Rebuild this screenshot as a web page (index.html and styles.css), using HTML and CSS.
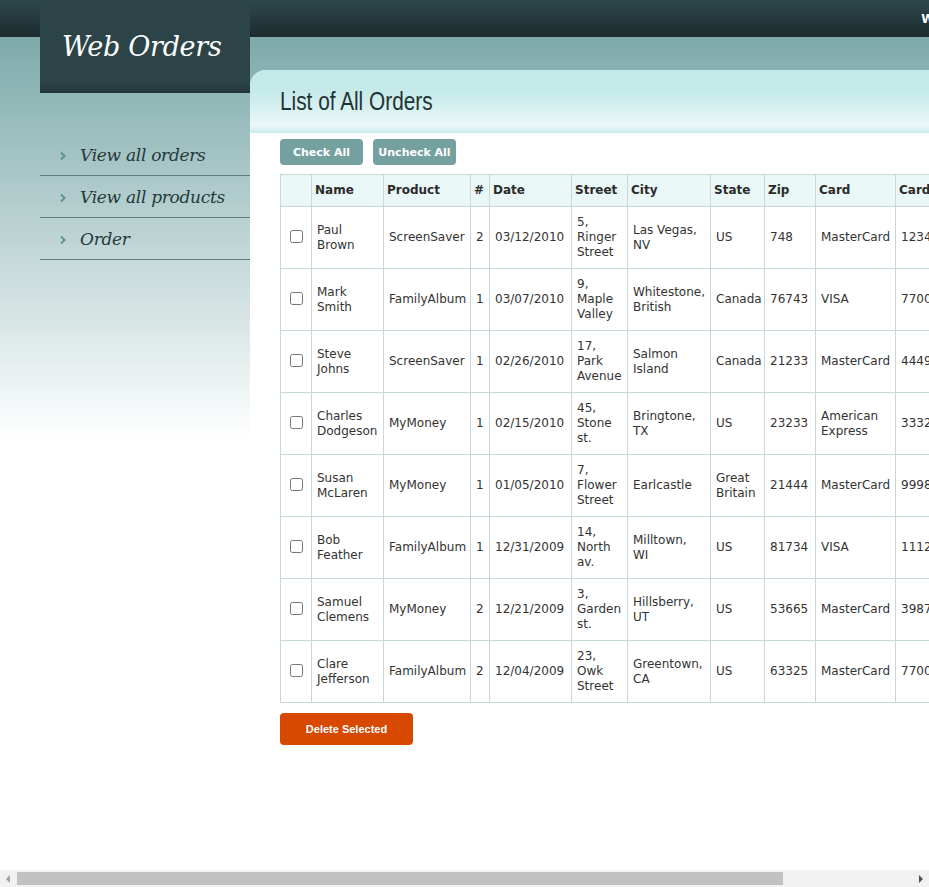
FILE: index.html
```html
<!DOCTYPE html>
<html>
<head>
<meta charset="utf-8">
<title>Web Orders</title>
<link rel="stylesheet" href="styles.css">
</head>
<body>
<div class="wrap">
  <aside class="sidebar">
    <div class="logo">Web Orders</div>
    <ul class="menu">
      <li><svg class="chev" width="8" height="10" viewBox="0 0 8 10"><polyline points="2,1.5 5.5,5 2,8.5" fill="none" stroke="#5b9292" stroke-width="2"/></svg><a href="#">View all orders</a></li>
      <li><svg class="chev" width="8" height="10" viewBox="0 0 8 10"><polyline points="2,1.5 5.5,5 2,8.5" fill="none" stroke="#5b9292" stroke-width="2"/></svg><a href="#">View all products</a></li>
      <li><svg class="chev" width="8" height="10" viewBox="0 0 8 10"><polyline points="2,1.5 5.5,5 2,8.5" fill="none" stroke="#5b9292" stroke-width="2"/></svg><a href="#">Order</a></li>
    </ul>
  </aside>
  <main class="main">
    <div class="userbar"><span class="user">Welcome, Tester! | Logout</span></div>
    <section class="panel">
      <h2 class="panel-title"><span class="title-text">List of All Orders</span></h2>
      <div class="panel-body">
        <div class="actions">
          <button class="btn btn-teal">Check All</button>
          <button class="btn btn-teal">Uncheck All</button>
        </div>
        <table class="orders">
          <colgroup>
            <col class="c-chk"><col class="c-name"><col class="c-prod"><col class="c-qty"><col class="c-date"><col class="c-street"><col class="c-city"><col class="c-state"><col class="c-zip"><col class="c-card"><col class="c-num"><col class="c-exp"><col class="c-edit">
          </colgroup>
          <thead>
            <tr><th></th><th>Name</th><th>Product</th><th>#</th><th>Date</th><th>Street</th><th>City</th><th>State</th><th>Zip</th><th>Card</th><th>Card Number</th><th>Exp</th><th></th></tr>
          </thead>
          <tbody>
            <tr><td class="chk"><input type="checkbox"></td><td>Paul Brown</td><td>ScreenSaver</td><td>2</td><td>03/12/2010</td><td>5, Ringer Street</td><td>Las Vegas, NV</td><td>US</td><td>748</td><td>MasterCard</td><td>123456789012</td><td>02/24</td><td></td></tr>
            <tr><td class="chk"><input type="checkbox"></td><td>Mark Smith</td><td>FamilyAlbum</td><td>1</td><td>03/07/2010</td><td>9, Maple Valley</td><td>Whitestone, British</td><td>Canada</td><td>76743</td><td>VISA</td><td>770077007700</td><td>01/15</td><td></td></tr>
            <tr><td class="chk"><input type="checkbox"></td><td>Steve Johns</td><td>ScreenSaver</td><td>1</td><td>02/26/2010</td><td>17, Park Avenue</td><td>Salmon Island</td><td>Canada</td><td>21233</td><td>MasterCard</td><td>444993876233</td><td>03/11</td><td></td></tr>
            <tr><td class="chk"><input type="checkbox"></td><td>Charles Dodgeson</td><td>MyMoney</td><td>1</td><td>02/15/2010</td><td>45, Stone st.</td><td>Bringtone, TX</td><td>US</td><td>23233</td><td>American Express</td><td>333255557777</td><td>03/11</td><td></td></tr>
            <tr><td class="chk"><input type="checkbox"></td><td>Susan McLaren</td><td>MyMoney</td><td>1</td><td>01/05/2010</td><td>7, Flower Street</td><td>Earlcastle</td><td>Great Britain</td><td>21444</td><td>MasterCard</td><td>999888777666</td><td>02/11</td><td></td></tr>
            <tr><td class="chk"><input type="checkbox"></td><td>Bob Feather</td><td>FamilyAlbum</td><td>1</td><td>12/31/2009</td><td>14, North av.</td><td>Milltown,<br>WI</td><td>US</td><td>81734</td><td>VISA</td><td>111222333444</td><td>10/11</td><td></td></tr>
            <tr><td class="chk"><input type="checkbox"></td><td>Samuel Clemens</td><td>MyMoney</td><td>2</td><td>12/21/2009</td><td>3, Garden st.</td><td>Hillsberry, UT</td><td>US</td><td>53665</td><td>MasterCard</td><td>398765432198</td><td>07/11</td><td></td></tr>
            <tr><td class="chk"><input type="checkbox"></td><td>Clare Jefferson</td><td>FamilyAlbum</td><td>2</td><td>12/04/2009</td><td>23, Owk Street</td><td>Greentown, CA</td><td>US</td><td>63325</td><td>MasterCard</td><td>770077007700</td><td>08/12</td><td></td></tr>
          </tbody>
        </table>
        <button class="btn btn-delete">Delete Selected</button>
      </div>
    </section>
  </main>
</div>
<div class="hscroll" aria-hidden="true">
  <span class="arrow arrow-left"></span>
  <span class="track"><span class="thumb"></span></span>
  <span class="arrow arrow-right"></span>
</div>
</body>
</html>
```
FILE: styles.css
```css
html, body {
  margin: 0;
  padding: 0;
}
body {
  min-height: 870px;
  font-family: "DejaVu Sans", Verdana, sans-serif;
  font-size: 12px;
  color: #333;
  background:
    linear-gradient(#2e484c, #1c2a2d) 0 0 / 100% 37px no-repeat,
    linear-gradient(#7eaaaa 37px, #ffffff 440px) no-repeat;
  background-color: #fff;
}
.wrap {
  display: flex;
  align-items: stretch;
  padding-left: 40px;
  width: max-content;
  min-height: 870px;
}
.sidebar {
  width: 210px;
  flex: none;
}
.logo {
  height: 93px;
  box-sizing: border-box;
  padding: 30px 0 0 22px;
  background: linear-gradient(#2c4448 0, #2c4448 80px, #23363a 93px);
  color: #fff;
  font-family: "DejaVu Serif", Georgia, serif;
  font-style: italic;
  font-size: 27px;
  line-height: 34px;
  letter-spacing: -0.3px;
}
.menu {
  list-style: none;
  margin: 41px 0 0;
  padding: 0;
}
.menu li {
  height: 41px;
  border-bottom: 1px solid #5c7e7e;
  display: flex;
  align-items: center;
  padding-left: 19px;
}
.chev {
  margin-right: 13px;
  margin-top: 2px;
}
.menu a {
  font-family: "DejaVu Serif", Georgia, serif;
  font-style: italic;
  font-size: 17px;
  color: #24393b;
  text-decoration: none;
  letter-spacing: -0.3px;
}
.main {
  flex: none;
  display: flex;
  flex-direction: column;
}
.userbar {
  height: 37px;
  display: flex;
  align-items: center;
  justify-content: flex-end;
  margin-bottom: 33px;
}
.user {
  color: #fff;
  font-weight: bold;
  font-size: 12px;
  white-space: nowrap;
  margin-right: -8px;
}
.panel {
  flex: 1;
  background: #fff;
  border-top-left-radius: 16px;
  overflow: hidden;
}
.panel-title {
  margin: 0;
  height: 63px;
  box-sizing: border-box;
  padding: 16px 0 0 30px;
  font-family: "Liberation Sans", Arial, sans-serif;
  font-weight: normal;
  font-size: 26px;
  line-height: 30px;
  color: #1f3334;
  background: linear-gradient(#c2e8e8 0, #c6eaea 22px, #e9f7f7 54px, #e6f6f6 57px, #c7eaea 63px);
}
.title-text {
  display: inline-block;
  transform: scaleX(0.8);
  transform-origin: left center;
}
.panel-body {
  padding: 6px 10px 20px 30px;
}
.actions {
  display: flex;
  gap: 10px;
  margin-bottom: 9px;
}
.btn {
  border: 0;
  color: #fff;
  font-weight: bold;
  cursor: pointer;
}
.btn-teal {
  width: 83px;
  height: 26px;
  border-radius: 4px;
  background: #74a09f;
  font-family: "DejaVu Sans", Verdana, sans-serif;
  font-size: 11px;
  padding: 0;
}
.btn-delete {
  display: block;
  margin-top: 10px;
  width: 133px;
  height: 32px;
  border-radius: 4px;
  background: #d74800;
  font-family: "Liberation Sans", Arial, sans-serif;
  font-size: 11px;
  padding: 0;
}
.orders {
  border-collapse: collapse;
  table-layout: fixed;
  width: 775px;
  border: 1px solid #c8d8d8;
}
.c-chk { width: 31px; }
.c-name { width: 72px; }
.c-prod { width: 87px; }
.c-qty { width: 19px; }
.c-date { width: 82px; }
.c-street { width: 56px; }
.c-city { width: 83px; }
.c-state { width: 54px; }
.c-zip { width: 51px; }
.c-card { width: 80px; }
.c-num { width: 104px; }
.c-exp { width: 50px; }
.c-edit { width: 30px; }
.orders th, .orders td {
  border: 1px solid #c8d8d8;
  padding: 0 4px 0 5px;
  text-align: left;
  vertical-align: middle;
  line-height: 15px;
  overflow: visible;
}
.orders th {
  height: 31px;
  padding-left: 3px;
  background: #eaf7f7;
  font-weight: bold;
  color: #2b2b2b;
}
.orders td {
  height: 61px;
}
.orders td.chk {
  padding: 0 0 0 5px;
}
.orders input[type="checkbox"] {
  margin: 1px 0 0 4px;
  width: 13px;
  height: 13px;
}
.hscroll {
  position: fixed;
  left: 0;
  right: 0;
  bottom: 0;
  height: 17px;
  background: #f1f1f1;
  display: flex;
  align-items: center;
}
.arrow {
  width: 17px;
  height: 17px;
  flex: none;
  position: relative;
}
.arrow::after {
  content: "";
  position: absolute;
  top: 5px;
  border-top: 4px solid transparent;
  border-bottom: 4px solid transparent;
}
.arrow-left::after {
  left: 6px;
  border-right: 4px solid #a3a3a3;
}
.arrow-right::after {
  left: 7px;
  border-left: 4px solid #505050;
}
.track {
  flex: 1;
  height: 13px;
  display: flex;
}
.thumb {
  width: 766px;
  height: 13px;
  background: #c1c1c1;
}
```
